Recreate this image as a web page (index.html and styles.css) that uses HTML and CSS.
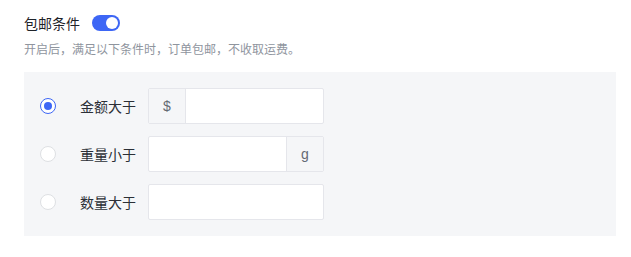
FILE: index.html
```html
<!DOCTYPE html>
<html lang="zh-CN">
<head>
  <meta charset="UTF-8">
  <title>包邮条件</title>
  <link rel="stylesheet" href="styles.css">
</head>
<body>
  <div class="section">
    <div class="section-head">
      <span class="section-title">包邮条件</span>
      <span class="switch on"><span class="switch-knob"></span></span>
    </div>
    <p class="section-desc">开启后，满足以下条件时，订单包邮，不收取运费。</p>

    <div class="rule-box">
      <div class="rule-row">
        <span class="radio checked"></span>
        <span class="rule-label">金额大于</span>
        <div class="field">
          <span class="addon addon-left">$</span>
          <input class="field-input" type="text">
        </div>
      </div>
      <div class="rule-row">
        <span class="radio"></span>
        <span class="rule-label">重量小于</span>
        <div class="field">
          <input class="field-input" type="text">
          <span class="addon addon-right">g</span>
        </div>
      </div>
      <div class="rule-row">
        <span class="radio"></span>
        <span class="rule-label">数量大于</span>
        <div class="field">
          <input class="field-input" type="text">
        </div>
      </div>
    </div>
  </div>
</body>
</html>
```

FILE: styles.css
```css
body {
  margin: 0;
  background: #fff;
  font-family: "Noto Sans CJK SC", "Noto Sans", sans-serif;
  color: #1f2329;
}

.section {
  padding: 13px 15px 0 24px;
}

.section-head {
  display: flex;
  align-items: center;
  gap: 12px;
  height: 20px;
}

.section-title {
  font-size: 14px;
  line-height: 20px;
  color: #1f2329;
}

.switch {
  width: 28px;
  height: 16px;
  border-radius: 8px;
  background: #c4c7cc;
  position: relative;
  display: inline-block;
}

.switch.on {
  background: #3d66f5;
}

.switch-knob {
  position: absolute;
  top: 2px;
  left: 2px;
  width: 12px;
  height: 12px;
  border-radius: 50%;
  background: #fff;
}

.switch.on .switch-knob {
  left: 14px;
}

.section-desc {
  margin: 7px 0 0;
  font-size: 12px;
  line-height: 18px;
  color: #8f959e;
}

.rule-box {
  margin-top: 14px;
  background: #f5f6f8;
  padding: 16px;
  display: flex;
  flex-direction: column;
  gap: 12px;
}

.rule-row {
  display: flex;
  align-items: center;
  height: 36px;
}

.radio {
  width: 16px;
  height: 16px;
  box-sizing: border-box;
  border-radius: 50%;
  border: 1px solid #dee0e3;
  background: #fff;
  position: relative;
}

.radio.checked {
  border-color: #3d66f5;
}

.radio.checked::after {
  content: "";
  position: absolute;
  top: 3px;
  left: 3px;
  width: 8px;
  height: 8px;
  border-radius: 50%;
  background: #3d66f5;
}

.rule-label {
  margin-left: 24px;
  width: 56px;
  font-size: 14px;
  line-height: 20px;
  color: #2b2f36;
}

.field {
  margin-left: 12px;
  display: flex;
  width: 176px;
  height: 36px;
  box-sizing: border-box;
  border: 1px solid #e5e6eb;
  border-radius: 2px;
  background: #fff;
}

.field-input {
  flex: 1;
  min-width: 0;
  border: none;
  outline: none;
  padding: 0 10px;
  background: transparent;
  font: inherit;
}

.addon {
  display: flex;
  align-items: center;
  justify-content: center;
  width: 36px;
  background: #f5f6f8;
  font-family: "Liberation Sans", "Noto Sans CJK SC", sans-serif;
  font-size: 14px;
  color: #646a73;
}

.addon-left {
  border-right: 1px solid #e5e6eb;
}

.addon-right {
  border-left: 1px solid #e5e6eb;
}
```
